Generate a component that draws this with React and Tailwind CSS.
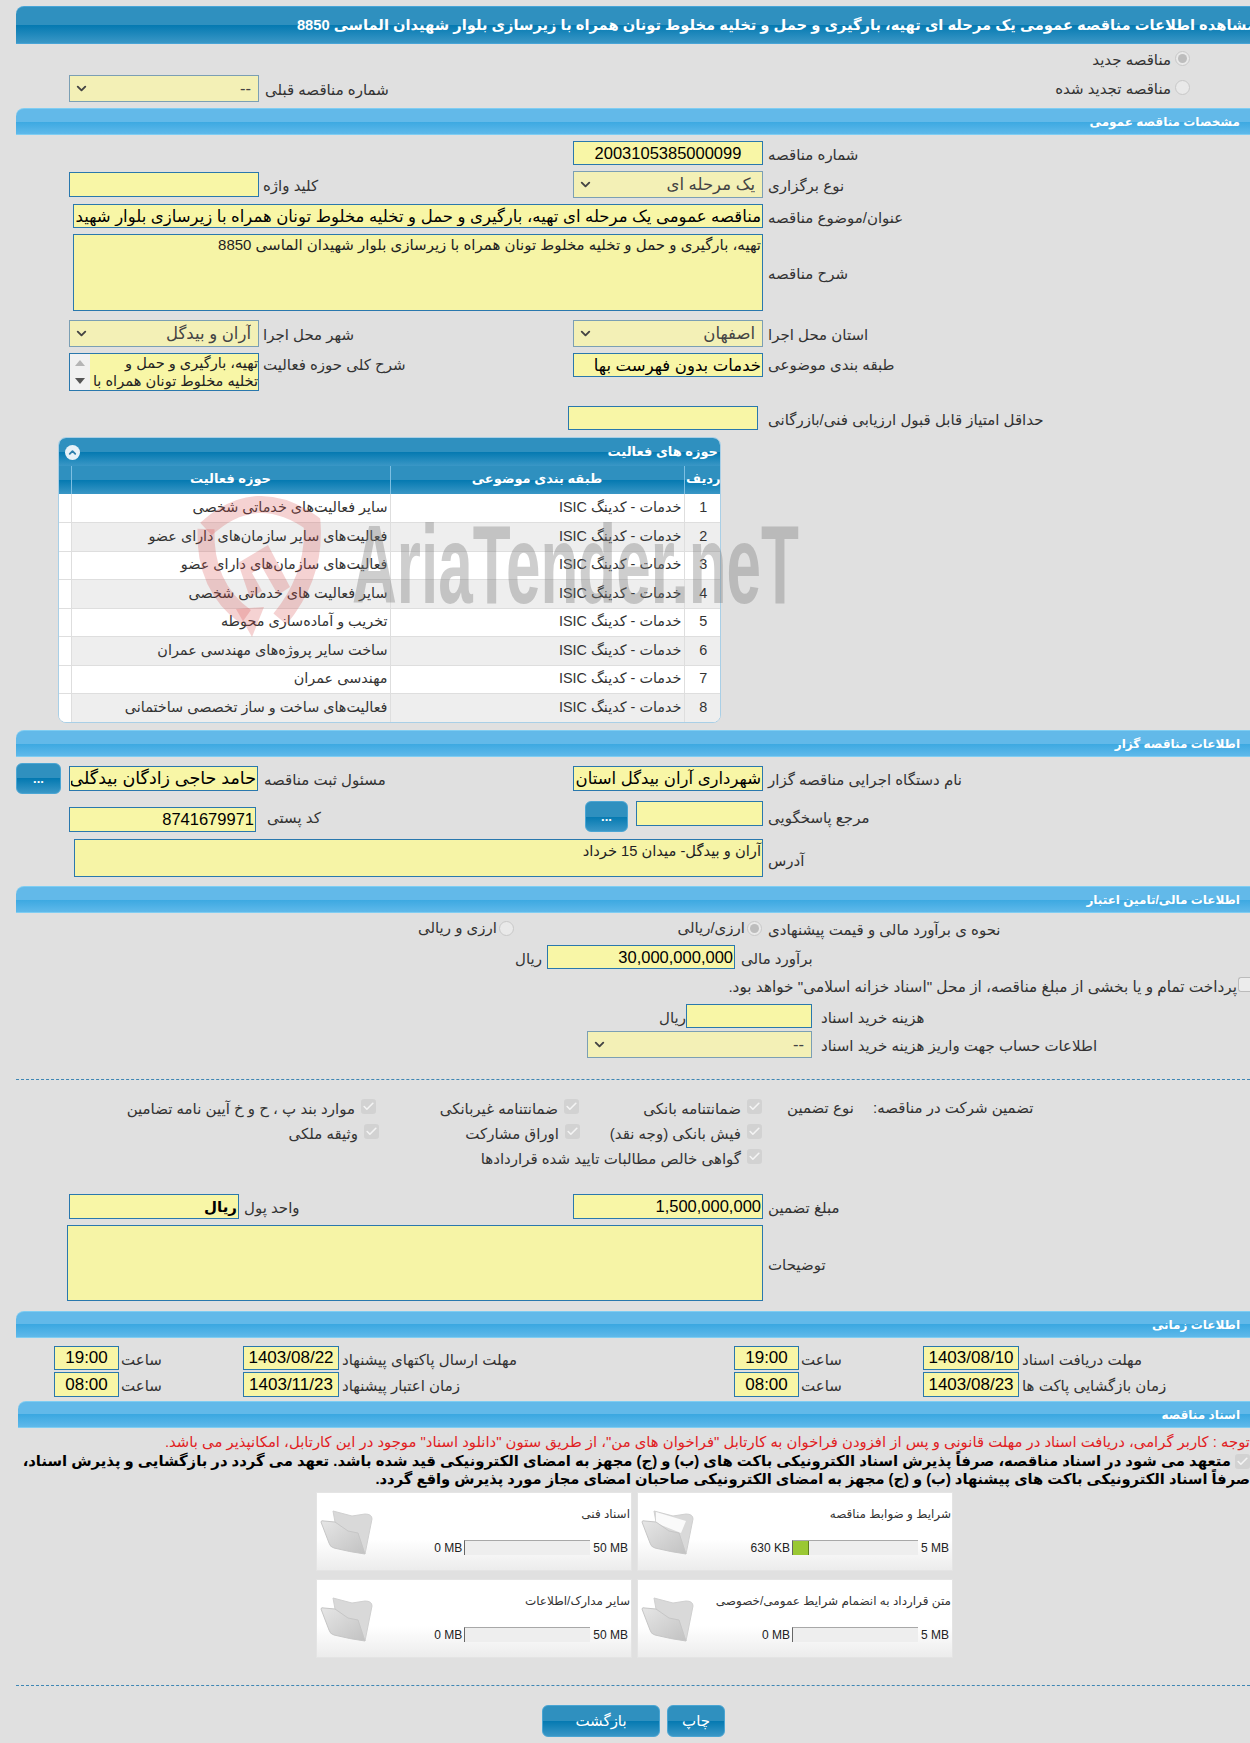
import { Check, ChevronDown, ChevronUp } from 'lucide-react';

const titleText = 'تهیه، بارگیری و حمل و تخلیه مخلوط تونان همراه با زیرسازی بلوار شهیدان الماسی 8850';

const activities = [
  'سایر فعالیت‌های خدماتی شخصی',
  'فعالیت‌های سایر سازمان‌های دارای عضو',
  'فعالیت‌های سازمان‌های دارای عضو',
  'سایر فعالیت های خدماتی شخصی',
  'تخریب و آماده‌سازی محوطه',
  'ساخت سایر پروژه‌های مهندسی عمران',
  'مهندسی عمران',
  'فعالیت‌های ساخت و ساز تخصصی ساختمانی',
];

const darkBar = 'bg-[linear-gradient(to_bottom,#2f90bf_0%,#2f90bf_50%,#0479b1_50%,#3a97c6_100%)]';
const fieldClass = 'h-full w-full min-w-0 border border-[#2a78ad] bg-[#f8f6a6] px-[1px] text-black outline-none';

function Field({ value = '', align = 'text-right', className = 'text-[16.5px]' }) {
  return <input dir="rtl" readOnly value={value} className={`${fieldClass} ${align} ${className}`} />;
}

function Select({ value, className = '' }) {
  return (
    <div className={`relative h-full w-full border border-[#7b9fb4] bg-[#f3f0b6] ${className}`}>
      <select dir="rtl" disabled value={value} className="h-full w-full appearance-none bg-transparent pr-[7px] text-[16.5px] text-[#444] opacity-100 outline-none">
        <option value={value}>{value}</option>
      </select>
      <ChevronDown size={15} strokeWidth={3} className="absolute left-[4px] top-[5px] text-[#444]" />
    </div>
  );
}

function Label({ children, className = '' }) {
  return <span dir="rtl" className={`block pt-[2px] text-left text-[15px] leading-none whitespace-nowrap text-[#333] ${className}`}>{children}</span>;
}

function Row({ left, leftLabel, main, label, className = '', mt = 'mt-[6px]' }) {
  return (
    <div className={`grid grid-cols-[69px_190px_4px_310px_190px_5px_482px] items-center ${mt} ${className}`}>
      <div />
      <div className="h-full">{left}</div>
      <div />
      <div className="self-center">{leftLabel}</div>
      <div className="h-full">{main}</div>
      <div />
      <div className="self-center">{label}</div>
    </div>
  );
}

function Section({ title, className = 'ml-4', mt = '' }) {
  return (
    <div dir="rtl" className={`${className} ${mt} flex h-[27px] items-center rounded-tl-[8px] border-y border-[#7fcdf2] bg-[linear-gradient(to_bottom,#62b9e9_0%,#62b9e9_50%,#3ba8e1_50%,#5fb9ea_100%)] pr-[10px] text-[12px] font-bold text-white`}>
      {title}
    </div>
  );
}

function Radio({ checked = false }) {
  return (
    <span className="flex h-[15px] w-[15px] shrink-0 items-center justify-center rounded-full border border-[#c8c8c8] bg-[#e9e9e9]">
      {checked && <span className="h-[9px] w-[9px] rounded-full bg-[#bdbdbd]" />}
    </span>
  );
}

function Checked({ className = '' }) {
  return (
    <span className={`flex h-[15px] w-[15px] shrink-0 items-center justify-center rounded-[3px] bg-[#d2d2d2] ${className}`}>
      <Check size={13} strokeWidth={3} className="text-[#f4f4f4]" />
    </span>
  );
}

function Option({ text, className = '' }) {
  return (
    <div dir="rtl" className={`flex items-center gap-[6px] ${className}`}>
      <Checked />
      <span className="mt-[5px] whitespace-nowrap text-[15px] text-[#333]">{text}</span>
    </div>
  );
}

function DarkButton({ children, className = '' }) {
  return (
    <button className={`flex items-center justify-center rounded-[6px] border border-[#4aa5d3] ${darkBar} text-white ${className}`}>
      {children}
    </button>
  );
}

function Folder({ open = false }) {
  return (
    <svg width="54" height="46" viewBox="0 0 54 46" className="mt-[17px] ml-[3px] shrink-0">
      <defs>
        <linearGradient id="folderFront" x1="0" y1="0" x2="1" y2="1">
          <stop offset="0" stopColor="#e6e6e6" />
          <stop offset="1" stopColor="#c2c2c2" />
        </linearGradient>
      </defs>
      <path d="M13 1 L32 6 L45 4 Q52 4 52 9 L45 44 L15 12 Z" fill="#d9d9d9" stroke="#d0d0d0" strokeLinejoin="round" />
      {open && <path d="M15 2 L45 11 L40 23 L15 13 Z" fill="#fafafa" />}
      <path d="M1 12 Q1 10 4 11 L15 12 L28 21 L38 23 L45 44 Q30 42 14 38 Q10 37 9 33 Z" fill="url(#folderFront)" stroke="#c6c6c6" strokeLinejoin="round" />
    </svg>
  );
}

function DocCard({ title, used, max, pct = 0, open }) {
  return (
    <div className="flex h-[79px] border border-[#e4e4e4] bg-[linear-gradient(to_bottom,#ffffff_0%,#ffffff_60%,#ececec_100%)]">
      <Folder open={open} />
      <div className="flex min-w-0 flex-1 flex-col pr-[3px]">
        <div dir="rtl" className="mt-[12px] -mr-[2px] h-[18px] whitespace-nowrap text-[12px] leading-[18px] text-[#333]">{title}</div>
        <div className="mt-[17px] flex h-[15px] items-center justify-end text-[12px] text-[#222]">
          <span className="mr-[2px] whitespace-nowrap">{used}</span>
          <div className="h-[15px] w-[126px] border-t border-l border-t-[#a8a8a8] border-l-[#666] bg-[#eeeeee]">
            <div className="h-full border-r border-[#5f7f1f] bg-[#9ac833]" style={{ width: `${pct}%`, borderRightWidth: pct ? 1 : 0 }} />
          </div>
          <span className="ml-[3px] whitespace-nowrap">{max}</span>
        </div>
      </div>
    </div>
  );
}

function DateCell({ label, date, time }) {
  return (
    <div className="flex h-full items-center">
      <div className="h-full w-[65px]"><Field value={time} align="text-center" className="text-[17px]" /></div>
      <Label className="ml-[2px] w-[122px]">ساعت</Label>
      <div className="h-full w-[96px]"><Field value={date} align="text-center" className="text-[17px]" /></div>
      <Label className="ml-[3px]">{label}</Label>
    </div>
  );
}

function Watermark() {
  return (
    <svg width="620" height="150" viewBox="0 0 620 150" className="pointer-events-none absolute left-[190px] top-[495px]">
      <g fill="none" stroke="#d84a4a" strokeOpacity="0.25" strokeWidth="17" strokeLinecap="butt">
        <path d="M16 34 Q66 -12 122 28 Q126 80 90 124" />
        <path d="M16 34 Q14 92 56 122" />
      </g>
      <path d="M46 114 L74 112 L62 142 Z" fill="#d84a4a" fillOpacity="0.25" />
      <path d="M48 68 L78 50 L100 92 L88 100 L72 72 L62 78 L72 96 L60 103 Z" fill="#d84a4a" fillOpacity="0.25" />
      <text x="162" y="108" textLength="447" lengthAdjust="spacingAndGlyphs" fill="#777" fillOpacity="0.36" fontSize="112" fontWeight="700" fontFamily="'Liberation Sans Narrow','Liberation Sans',sans-serif">AriaTender.neT</text>
    </svg>
  );
}

export default function App() {
  return (
    <div className="relative h-[1743px] w-[1250px] overflow-hidden bg-[#e0e0e0] font-['Liberation_Sans','DejaVu_Sans',sans-serif]">
      {/* Page title */}
      <div className="pt-[6px]">
        <div dir="rtl" className={`ml-4 flex h-[38px] items-center overflow-hidden rounded-tl-[8px] border-y border-[#48a4d6] ${darkBar} text-[14.7px] font-bold whitespace-nowrap text-white`}>
          <span className="-mr-[6px]">مشاهده اطلاعات مناقصه عمومی یک مرحله ای {titleText}</span>
        </div>
      </div>

      {/* Tender type */}
      <div className="grid h-[64px] grid-cols-[69px_190px_6px_1fr_auto]">
        <div />
        <div className="mt-[31px] h-[27px]"><Select value="--" /></div>
        <div />
        <Label className="mt-[36px]">شماره مناقصه قبلی</Label>
        <div dir="rtl" className="flex w-[300px] flex-col pr-[60px]">
          <div className="flex h-[29px] items-center gap-[4px]"><Radio checked /><span className="mt-[4px] text-[15px] text-[#333]">مناقصه جدید</span></div>
          <div className="flex h-[29px] items-center gap-[4px]"><Radio /><span className="mt-[4px] text-[15px] text-[#333]">مناقصه تجدید شده</span></div>
        </div>
      </div>

      <Section title="مشخصات مناقصه عمومی" />

      <Row className="h-[24px]" main={<Field value="2003105385000099" align="text-center" />} label={<Label>شماره مناقصه</Label>} />
      <Row
        className="h-[27px]"
        left={<div className="mt-[1px] h-[25px]"><Field /></div>}
        leftLabel={<Label>کلید واژه</Label>}
        main={<Select value="یک مرحله ای" />}
        label={<Label>نوع برگزاری</Label>}
      />
      <div className="mt-[6px] grid h-[24px] grid-cols-[73px_690px_5px_482px] items-center">
        <div />
        <div className="h-full"><Field value={`مناقصه عمومی یک مرحله ای ${titleText}`} /></div>
        <div />
        <Label>عنوان/موضوع مناقصه</Label>
      </div>
      <div className="mt-[6px] grid h-[77px] grid-cols-[73px_690px_5px_482px] items-center">
        <div />
        <textarea dir="rtl" readOnly value={titleText} className="h-full resize-none overflow-hidden border border-[#2a78ad] bg-[#f6f4a6] px-[1px] text-[15px] leading-[20px] text-[#222] outline-none" />
        <div />
        <Label>شرح مناقصه</Label>
      </div>
      <Row
        mt="mt-[9px]"
        className="h-[27px]"
        left={<Select value="آران و بیدگل" />}
        leftLabel={<Label>شهر محل اجرا</Label>}
        main={<Select value="اصفهان" />}
        label={<Label>استان محل اجرا</Label>}
      />
      <Row
        className="h-[38px] items-start"
        left={
          <div className="flex h-[38px] border border-[#2a78ad] bg-[#f8f6a6]">
            <div className="flex w-[20px] shrink-0 flex-col items-center justify-between bg-[#f1f1f1] py-[6px]">
              <svg width="10" height="6" viewBox="0 0 10 6"><polygon points="5,0 10,6 0,6" fill="#b5b5b5" /></svg>
              <svg width="10" height="6" viewBox="0 0 10 6"><polygon points="0,0 10,0 5,6" fill="#555" /></svg>
            </div>
            <div dir="rtl" className="min-w-0 flex-1 overflow-hidden text-[14.6px] leading-[18px] whitespace-nowrap text-[#222]">
              <div>تهیه، بارگیری و حمل و</div>
              <div>تخلیه مخلوط تونان همراه با</div>
            </div>
          </div>
        }
        leftLabel={<Label className="-mt-[17px]">شرح کلی حوزه فعالیت</Label>}
        main={<div className="h-[24px]"><Field value="خدمات بدون فهرست بها" /></div>}
        label={<Label className="-mt-[17px]">طبقه بندی موضوعی</Label>}
      />
      <div className="mt-[15px] grid h-[24px] grid-cols-[568px_190px_10px_482px] items-center">
        <div />
        <div className="h-full"><Field /></div>
        <div />
        <Label>حداقل امتیاز قابل قبول ارزیابی فنی/بازرگانی</Label>
      </div>

      {/* Activity table */}
      <div className="mt-[7px] ml-[58px] h-[286px] w-[663px] overflow-hidden rounded-[8px] border border-[#a9cfe6] bg-white">
        <div dir="rtl" className={`flex h-[28px] items-center justify-between ${darkBar} px-[2px] text-[13px] font-bold text-white`}>
          <span>حوزه های فعالیت</span>
          <span className="ml-[4px] flex h-[15px] w-[15px] items-center justify-center rounded-full bg-[#e8f2f8]">
            <ChevronUp size={11} strokeWidth={4} className="text-[#2f80ad]" />
          </span>
        </div>
        <table dir="rtl" className="w-full table-fixed border-collapse text-[14.4px] text-[#333]">
          <colgroup>
            <col className="w-[38px]" />
            <col className="w-[294px]" />
            <col className="w-[319px]" />
            <col className="w-[12px]" />
          </colgroup>
          <thead>
            <tr className={`h-[28px] ${darkBar} text-[13px] font-bold text-white`}>
              <th className="border-l border-[#7dbfe2] pb-[3px] font-bold">ردیف</th>
              <th className="border-l border-[#7dbfe2] pb-[3px] font-bold">طبقه بندی موضوعی</th>
              <th className="border-l border-[#7dbfe2] pb-[3px] font-bold">حوزه فعالیت</th>
              <th />
            </tr>
          </thead>
          <tbody>
            {activities.map((name, i) => (
              <tr key={name} className={`h-[28.5px] border-b border-[#dedede] ${i % 2 ? 'bg-[#eeeeee]' : 'bg-white'}`}>
                <td className="border-l border-[#dedede] text-center">{i + 1}</td>
                <td className="border-l border-[#dedede] pr-[2px]">خدمات - کدینگ ISIC</td>
                <td className="border-l border-[#dedede] pr-[2px] whitespace-nowrap">{name}</td>
                <td className="bg-white" />
              </tr>
            ))}
          </tbody>
        </table>
      </div>

      <Section title="اطلاعات مناقصه گزار" mt="mt-[7px]" />

      {/* Organizer */}
      <div className="mt-[6px] grid h-[31px] grid-cols-[16px_45px_8px_189px_6px_309px_190px_5px_482px] items-center">
        <div />
        <DarkButton className="h-full w-full text-[13px] font-bold">...</DarkButton>
        <div />
        <div className="h-[25px]"><Field value="حامد حاجی زادگان بیدگلی" className="text-[17.5px]" /></div>
        <div />
        <Label>مسئول ثبت مناقصه</Label>
        <div className="h-[25px]"><Field value="شهرداری آران بیدگل استان" className="text-[16.5px]" /></div>
        <div />
        <Label>نام دستگاه اجرایی مناقصه گزار</Label>
      </div>
      <div className="mt-[7px] grid h-[31px] grid-cols-[69px_187px_11px_318px_43px_8px_127px_5px_482px] items-center">
        <div />
        <div className="mt-[6px] h-[25px]"><Field value="8741679971" /></div>
        <div />
        <Label>کد پستی</Label>
        <DarkButton className="h-full w-full text-[13px] font-bold">...</DarkButton>
        <div />
        <div className="h-[25px] self-start"><Field /></div>
        <div />
        <Label>مرجع پاسخگویی</Label>
      </div>
      <div className="mt-[7px] grid h-[38px] grid-cols-[74px_689px_5px_482px] items-center">
        <div />
        <textarea dir="rtl" readOnly value="آران و بیدگل- میدان 15 خرداد" className="h-full resize-none overflow-hidden border border-[#2a78ad] bg-[#f6f4a6] px-[1px] text-[14.7px] text-[#222] outline-none" />
        <div />
        <Label className="mt-[2px]">آدرس</Label>
      </div>

      <Section title="اطلاعات مالی/تامین اعتبار" mt="mt-[9px]" />

      {/* Finance */}
      <div className="mt-[4px] grid h-[17px] grid-cols-[520px_248px_482px] items-center">
        <div dir="rtl" className="flex items-center gap-[2px] pr-[6px]"><Radio /><span className="text-[15px] text-[#333]">ارزی و ریالی</span></div>
        <div dir="rtl" className="flex items-center gap-[2px] pr-[6px]"><Radio checked /><span className="text-[15px] text-[#333]">ارزی/ریالی</span></div>
        <Label>نحوه ی برآورد مالی و قیمت پیشنهادی</Label>
      </div>
      <div className="mt-[11px] grid h-[24px] grid-cols-[518px_24px_5px_188px_6px_1fr] items-center">
        <div />
        <Label>ریال</Label>
        <div />
        <div className="h-full"><Field value="30,000,000,000" /></div>
        <div />
        <Label>برآورد مالی</Label>
      </div>
      <div dir="rtl" className="mt-[8px] flex h-[15px] items-center gap-[1px]">
        <span className="h-[15px] w-[12px] shrink-0 rounded-l-[3px] border border-r-0 border-y-[#bbb] border-l-[#bbb] bg-[#ececec]" />
        <span className="mt-[6px] whitespace-nowrap text-[15.3px] text-[#333]">پرداخت تمام و یا بخشی از مبلغ مناقصه، از محل "اسناد خزانه اسلامی" خواهد بود.</span>
      </div>
      <div className="mt-[12px] grid h-[24px] grid-cols-[662px_24px_126px_9px_1fr] items-center">
        <div />
        <Label>ریال</Label>
        <div className="h-full"><Field /></div>
        <div />
        <Label>هزینه خرید اسناد</Label>
      </div>
      <div className="mt-[3px] grid h-[26px] grid-cols-[587px_225px_9px_1fr] items-center">
        <div />
        <Select value="--" />
        <div />
        <Label>اطلاعات حساب جهت واریز هزینه خرید اسناد</Label>
      </div>

      <div className="mt-[22px] ml-4 border-t border-dashed border-[#3f87b4]" />

      {/* Guarantee */}
      <div className="mt-[19px] grid grid-cols-[376px_203px_183px_488px] grid-rows-[25px_25px_25px]">
        <Option className="h-[15px]" text="موارد بند پ ، ح و خ آیین نامه تضامین" />
        <Option className="h-[15px]" text="ضمانتنامه غیربانکی" />
        <Option className="h-[15px]" text="ضمانتنامه بانکی" />
        <div className="flex h-[15px] items-center">
          <Label className="ml-[25px] w-[86px]">نوع تضمین</Label>
          <Label>تضمین شرکت در مناقصه:</Label>
        </div>
        <Option className="h-[15px] -mr-[3px]" text="وثیقه ملکی" />
        <Option className="h-[15px] -mr-px" text="اوراق مشارکت" />
        <Option className="h-[15px]" text="فیش بانکی (وجه نقد)" />
        <div />
        <Option className="col-start-3 h-[15px]" text="گواهی خالص مطالبات تایید شده قراردادها" />
      </div>

      <Row
        mt="mt-[20px]"
        className="h-[25px]"
        left={<div className="w-[170px]"><div className="h-[25px]"><Field value="ریال" className="text-[15px] font-bold" /></div></div>}
        leftLabel={<Label className="-ml-[19px]">واحد پول</Label>}
        main={<Field value="1,500,000,000" />}
        label={<Label>مبلغ تضمین</Label>}
      />
      <div className="mt-[6px] grid h-[76px] grid-cols-[67px_696px_5px_482px] items-center">
        <div />
        <textarea dir="rtl" readOnly className="h-full resize-none border border-[#2a78ad] bg-[#f6f4a6] outline-none" />
        <div />
        <Label>توضیحات</Label>
      </div>

      <Section title="اطلاعات زمانی" mt="mt-[10px]" />

      {/* Dates */}
      <div className="mt-[8px] grid h-[24px] grid-cols-[54px_680px_516px] items-center">
        <div />
        <DateCell date="1403/08/22" time="19:00" label="مهلت ارسال پاکتهای پیشنهاد" />
        <DateCell date="1403/08/10" time="19:00" label="مهلت دریافت اسناد" />
      </div>
      <div className="mt-[2px] grid h-[25px] grid-cols-[54px_680px_516px] items-center">
        <div />
        <DateCell date="1403/11/23" time="08:00" label="زمان اعتبار پیشنهاد" />
        <DateCell date="1403/08/23" time="08:00" label="زمان بازگشایی پاکت ها" />
      </div>

      <Section title="اسناد مناقصه" className="ml-[18px]" mt="mt-[4px]" />

      {/* Notice */}
      <div dir="rtl" className="mt-[5px] whitespace-nowrap">
        <div className="h-[19px] text-[14.85px] leading-[19px] text-[#e0201f]">توجه : کاربر گرامی، دریافت اسناد در مهلت قانونی و پس از افزودن فراخوان به کارتابل "فراخوان های من"، از طریق ستون "دانلود اسناد" موجود در این کارتابل، امکانپذیر می باشد.</div>
        <div className="flex h-[18px] items-center gap-[4px] text-[14.8px] font-bold text-black">
          <Checked />
          <span>متعهد می شود در اسناد مناقصه، صرفاً پذیرش اسناد الکترونیکی باکت های (ب) و (ج) مجهز به امضای الکترونیکی قید شده باشد. تعهد می گردد در بازگشایی و پذیرش اسناد،</span>
        </div>
        <div className="h-[18px] text-[14.7px] leading-[18px] font-bold text-black">صرفاً اسناد الکترونیکی باکت های پیشنهاد (ب) و (ج) مجهز به امضای الکترونیکی صاحبان امضای مجاز مورد پذیرش واقع گردد.</div>
      </div>

      {/* Documents */}
      <div className="mt-[4px] ml-[316px] grid w-[637px] grid-cols-2 gap-x-[5px] gap-y-[8px]">
        <DocCard title="اسناد فنی" used="0 MB" max="50 MB" />
        <DocCard title="شرایط و ضوابط مناقصه" used="630 KB" max="5 MB" pct={13} open />
        <DocCard title="سایر مدارک/اطلاعات" used="0 MB" max="50 MB" />
        <DocCard title="متن قرارداد به انضمام شرایط عمومی/خصوصی" used="0 MB" max="5 MB" />
      </div>

      <div className="mt-[27px] ml-4 border-t border-dashed border-[#3f87b4]" />

      <div className="mt-[19px] ml-[542px] flex gap-[7px]">
        <DarkButton className="h-[32px] w-[118px] text-[15px]">بازگشت</DarkButton>
        <DarkButton className="h-[32px] w-[58px] text-[15px]">چاپ</DarkButton>
      </div>

      <Watermark />
    </div>
  );
}
